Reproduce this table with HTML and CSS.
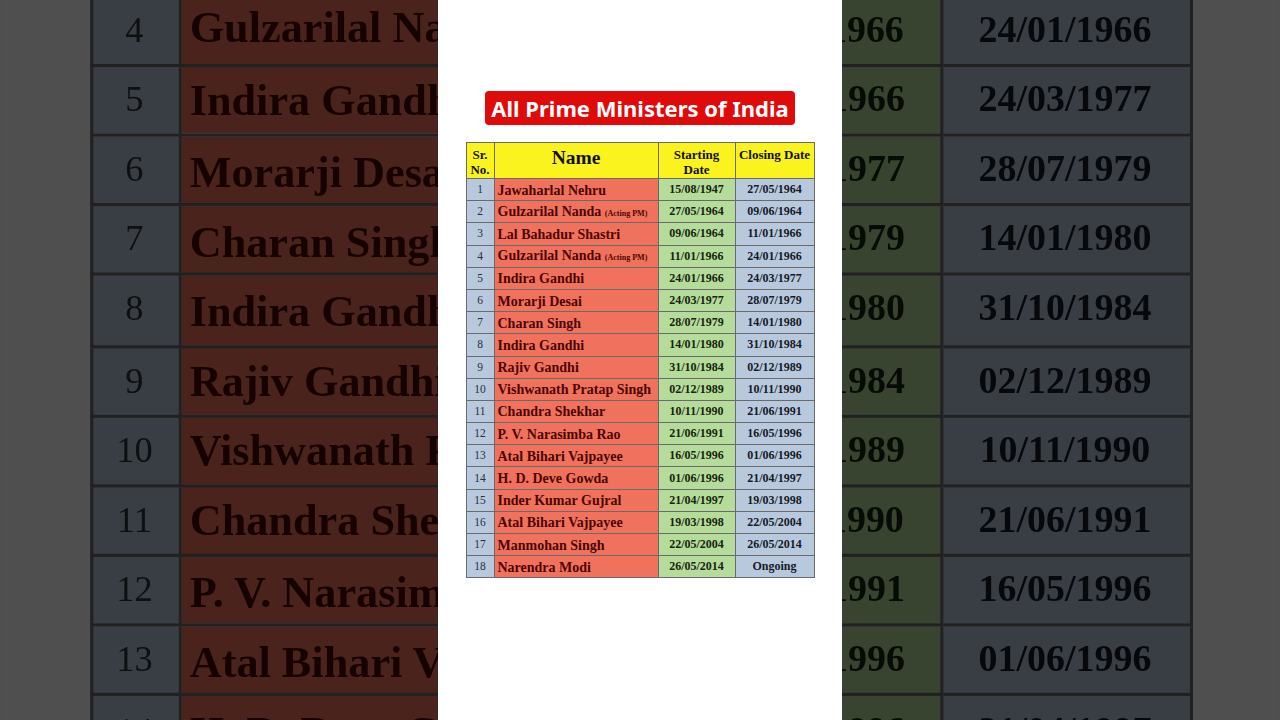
FILE: index.html
```html
<!DOCTYPE html>
<html lang="en">
<head>
<meta charset="utf-8">
<title>All Prime Ministers of India</title>
<link rel="stylesheet" href="styles.css">
</head>
<body>
<div class="stage">
  <div class="backdrop" aria-hidden="true">
    <div class="panel">
      <div class="title">All Prime Ministers of India</div>
      <table class="pm">
        <colgroup><col class="c-sr"><col class="c-name"><col class="c-start"><col class="c-end"></colgroup>
        <thead><tr><th class="h-sr">Sr.<br>No.</th><th class="h-name">Name</th><th class="h-start">Starting<br>Date</th><th class="h-end">Closing Date</th></tr></thead>
        <tbody>
          <tr><td class="sr">1</td><td class="nm">Jawaharlal Nehru</td><td class="st">15/08/1947</td><td class="en">27/05/1964</td></tr>
          <tr><td class="sr">2</td><td class="nm">Gulzarilal Nanda <small>(Acting PM)</small></td><td class="st">27/05/1964</td><td class="en">09/06/1964</td></tr>
          <tr><td class="sr">3</td><td class="nm">Lal Bahadur Shastri</td><td class="st">09/06/1964</td><td class="en">11/01/1966</td></tr>
          <tr><td class="sr">4</td><td class="nm">Gulzarilal Nanda <small>(Acting PM)</small></td><td class="st">11/01/1966</td><td class="en">24/01/1966</td></tr>
          <tr><td class="sr">5</td><td class="nm">Indira Gandhi</td><td class="st">24/01/1966</td><td class="en">24/03/1977</td></tr>
          <tr><td class="sr">6</td><td class="nm">Morarji Desai</td><td class="st">24/03/1977</td><td class="en">28/07/1979</td></tr>
          <tr><td class="sr">7</td><td class="nm">Charan Singh</td><td class="st">28/07/1979</td><td class="en">14/01/1980</td></tr>
          <tr><td class="sr">8</td><td class="nm">Indira Gandhi</td><td class="st">14/01/1980</td><td class="en">31/10/1984</td></tr>
          <tr><td class="sr">9</td><td class="nm">Rajiv Gandhi</td><td class="st">31/10/1984</td><td class="en">02/12/1989</td></tr>
          <tr><td class="sr">10</td><td class="nm">Vishwanath Pratap Singh</td><td class="st">02/12/1989</td><td class="en">10/11/1990</td></tr>
          <tr><td class="sr">11</td><td class="nm">Chandra Shekhar</td><td class="st">10/11/1990</td><td class="en">21/06/1991</td></tr>
          <tr><td class="sr">12</td><td class="nm">P. V. Narasimba Rao</td><td class="st">21/06/1991</td><td class="en">16/05/1996</td></tr>
          <tr><td class="sr">13</td><td class="nm">Atal Bihari Vajpayee</td><td class="st">16/05/1996</td><td class="en">01/06/1996</td></tr>
          <tr><td class="sr">14</td><td class="nm">H. D. Deve Gowda</td><td class="st">01/06/1996</td><td class="en">21/04/1997</td></tr>
          <tr><td class="sr">15</td><td class="nm">Inder Kumar Gujral</td><td class="st">21/04/1997</td><td class="en">19/03/1998</td></tr>
          <tr><td class="sr">16</td><td class="nm">Atal Bihari Vajpayee</td><td class="st">19/03/1998</td><td class="en">22/05/2004</td></tr>
          <tr><td class="sr">17</td><td class="nm">Manmohan Singh</td><td class="st">22/05/2004</td><td class="en">26/05/2014</td></tr>
          <tr><td class="sr">18</td><td class="nm">Narendra Modi</td><td class="st">26/05/2014</td><td class="en">Ongoing</td></tr>
        </tbody>
      </table>
    </div>
  </div>

  <div class="panel front">
    <div class="title">All Prime Ministers of India</div>
    <table class="pm">
      <colgroup><col class="c-sr"><col class="c-name"><col class="c-start"><col class="c-end"></colgroup>
      <thead><tr><th class="h-sr">Sr.<br>No.</th><th class="h-name">Name</th><th class="h-start">Starting<br>Date</th><th class="h-end">Closing Date</th></tr></thead>
      <tbody>
        <tr><td class="sr">1</td><td class="nm">Jawaharlal Nehru</td><td class="st">15/08/1947</td><td class="en">27/05/1964</td></tr>
        <tr><td class="sr">2</td><td class="nm">Gulzarilal Nanda <small>(Acting PM)</small></td><td class="st">27/05/1964</td><td class="en">09/06/1964</td></tr>
        <tr><td class="sr">3</td><td class="nm">Lal Bahadur Shastri</td><td class="st">09/06/1964</td><td class="en">11/01/1966</td></tr>
        <tr><td class="sr">4</td><td class="nm">Gulzarilal Nanda <small>(Acting PM)</small></td><td class="st">11/01/1966</td><td class="en">24/01/1966</td></tr>
        <tr><td class="sr">5</td><td class="nm">Indira Gandhi</td><td class="st">24/01/1966</td><td class="en">24/03/1977</td></tr>
        <tr><td class="sr">6</td><td class="nm">Morarji Desai</td><td class="st">24/03/1977</td><td class="en">28/07/1979</td></tr>
        <tr><td class="sr">7</td><td class="nm">Charan Singh</td><td class="st">28/07/1979</td><td class="en">14/01/1980</td></tr>
        <tr><td class="sr">8</td><td class="nm">Indira Gandhi</td><td class="st">14/01/1980</td><td class="en">31/10/1984</td></tr>
        <tr><td class="sr">9</td><td class="nm">Rajiv Gandhi</td><td class="st">31/10/1984</td><td class="en">02/12/1989</td></tr>
        <tr><td class="sr">10</td><td class="nm">Vishwanath Pratap Singh</td><td class="st">02/12/1989</td><td class="en">10/11/1990</td></tr>
        <tr><td class="sr">11</td><td class="nm">Chandra Shekhar</td><td class="st">10/11/1990</td><td class="en">21/06/1991</td></tr>
        <tr><td class="sr">12</td><td class="nm">P. V. Narasimba Rao</td><td class="st">21/06/1991</td><td class="en">16/05/1996</td></tr>
        <tr><td class="sr">13</td><td class="nm">Atal Bihari Vajpayee</td><td class="st">16/05/1996</td><td class="en">01/06/1996</td></tr>
        <tr><td class="sr">14</td><td class="nm">H. D. Deve Gowda</td><td class="st">01/06/1996</td><td class="en">21/04/1997</td></tr>
        <tr><td class="sr">15</td><td class="nm">Inder Kumar Gujral</td><td class="st">21/04/1997</td><td class="en">19/03/1998</td></tr>
        <tr><td class="sr">16</td><td class="nm">Atal Bihari Vajpayee</td><td class="st">19/03/1998</td><td class="en">22/05/2004</td></tr>
        <tr><td class="sr">17</td><td class="nm">Manmohan Singh</td><td class="st">22/05/2004</td><td class="en">26/05/2014</td></tr>
        <tr><td class="sr">18</td><td class="nm">Narendra Modi</td><td class="st">26/05/2014</td><td class="en">Ongoing</td></tr>
      </tbody>
    </table>
  </div>
</div>
</body>
</html>
```

FILE: styles.css
```css
html, body {
  margin: 0;
  padding: 0;
  width: 1280px;
  height: 720px;
  overflow: hidden;
  background: #4e4e4e;
}

.stage {
  position: relative;
  width: 1280px;
  height: 720px;
  overflow: hidden;
}

.backdrop {
  position: absolute;
  inset: 0;
  transform: scale(3.16);
  transform-origin: 640px 361px;
  filter: brightness(0.31) blur(0.15px);
}

.panel {
  width: 404px;
  height: 720px;
  margin: 0 auto;
  background: #ffffff;
  box-sizing: border-box;
  padding: 91px 28px 0;
  display: flex;
  flex-direction: column;
  align-items: center;
}

.front {
  position: relative;
  z-index: 1;
}

.title {
  background: #e10a0a;
  color: #ffffff;
  font-family: "Noto Sans", "Open Sans", sans-serif;
  font-weight: 700;
  font-size: 22px;
  line-height: 34px;
  height: 34px;
  padding: 0 6px;
  border-radius: 4px;
  white-space: nowrap;
}

.pm {
  margin-top: 17px;
  width: 348px;
  border-collapse: collapse;
  table-layout: fixed;
  font-family: "Liberation Serif", "Times New Roman", serif;
}

.c-sr { width: 28px; }
.c-name { width: 164px; }
.c-start { width: 77px; }
.c-end { width: 79px; }

.pm th, .pm td {
  border: 1px solid #6a6a6a;
  padding: 0;
  overflow: hidden;
  white-space: nowrap;
}

.pm thead tr { height: 36px; }

.pm th {
  background: #fbf31d;
  color: #111111;
  font-weight: 700;
  vertical-align: top;
  text-align: center;
}

.h-sr {
  font-size: 13px;
  line-height: 15px;
  padding-top: 4px !important;
}

.h-name {
  font-size: 19.5px;
  line-height: 22px;
  vertical-align: middle !important;
  padding-bottom: 5px !important;
}

.h-start {
  font-size: 13px;
  line-height: 15px;
  padding-top: 4px !important;
}

.h-end {
  font-size: 13px;
  line-height: 15px;
  padding-top: 4px !important;
}

.pm tbody tr { height: 22.2px; }

.pm td {
  vertical-align: middle;
  line-height: 16px;
}

.sr {
  background: #b9c9dd;
  color: #2a2f38;
  font-size: 11.5px;
  text-align: center;
  padding-bottom: 1px !important;
}

.nm {
  background: #f1725c;
  color: #4a0606;
  font-weight: 700;
  font-size: 14px;
  padding-left: 3px !important;
  padding-top: 2px !important;
  text-align: left;
}

.nm small {
  font-size: 8px;
  font-weight: 700;
}

.st {
  background: #b6dc9b;
  color: #17240f;
  font-weight: 700;
  font-size: 12px;
  text-align: center;
  padding-bottom: 1px !important;
}

.en {
  background: #b9c9dd;
  color: #141a26;
  font-weight: 700;
  font-size: 12px;
  text-align: center;
  padding-bottom: 1px !important;
}
```
